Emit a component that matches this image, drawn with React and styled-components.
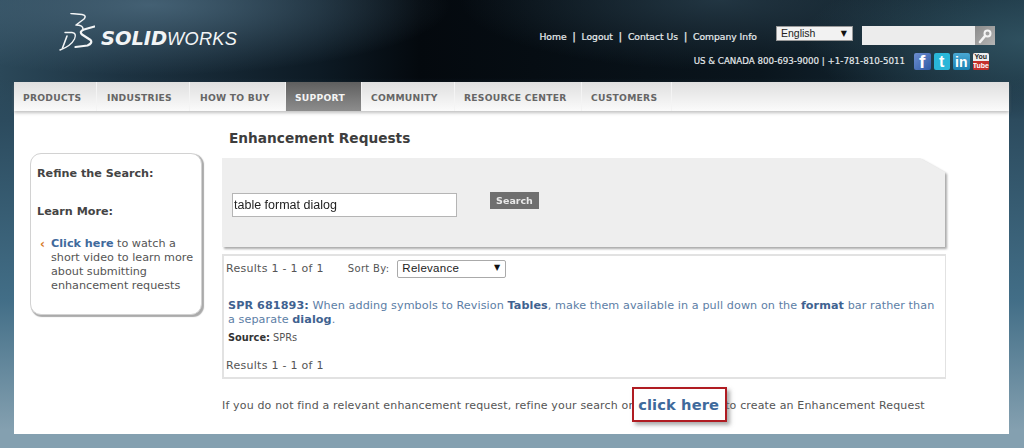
import React from 'react';
import styled, { createGlobalStyle } from 'styled-components';

const Global = createGlobalStyle`
  html, body { margin: 0; padding: 0; }
  body {
    width: 1024px; height: 448px; overflow: hidden;
    font-family: "DejaVu Sans", Verdana, sans-serif;
  }
`;

const Page = styled.div`
  width: 1024px; height: 448px; overflow: hidden;
  background:
    linear-gradient(to bottom, rgba(44,75,94,0) 78px, #2c4b5e 120px) top / 100% 120px no-repeat,
    radial-gradient(ellipse 300px 70px at 150px 5px, rgba(75,105,125,.85), rgba(75,105,125,0) 100%),
    radial-gradient(ellipse 220px 80px at 1024px 40px, rgba(50,85,100,.85), rgba(50,85,100,0) 100%),
    radial-gradient(ellipse 260px 70px at 720px 0px, rgba(40,62,76,.8), rgba(40,62,76,0) 100%),
    linear-gradient(to right, #2b4859 0, #1d3342 120px, #0d1a24 320px, #04090e 420px, #0a151d 760px, #1a3240 1024px) top / 100% 120px no-repeat,
    linear-gradient(to bottom, #2c4b5e 120px, #426e87 300px, #84a0b0 430px);
`;

const Header = styled.header`
  height: 82px; display: flex; justify-content: space-between;
`;
const Brand = styled.div`
  display: flex; align-items: flex-start; padding: 13px 0 0 57px; gap: 6px;
`;
const BrandName = styled.div`
  margin-top: 14px; color: #f2f4f5; font-family: "Liberation Sans", sans-serif;
  font-style: italic; font-size: 18.2px; line-height: 24px; letter-spacing: .3px; font-weight: 400; white-space: nowrap;
  b { font-family: "DejaVu Sans", sans-serif; font-size: 19.5px; font-weight: 700; letter-spacing: -0.1px; }
`;
const Tools = styled.div`
  width: 486px; padding: 26px 29px 0 0; box-sizing: border-box;
  display: flex; flex-direction: column; align-items: flex-end;
`;
const ToolRow = styled.div`
  display: flex; align-items: flex-start; width: 100%; justify-content: flex-end;
`;
const Links = styled.nav`
  display: flex; align-items: center; margin: 5px 19px 0 0; flex: none;
  font-size: 9.2px; line-height: 12px; color: #e8ecee; font-weight: 400;
  -webkit-text-stroke: .2px #e8ecee; white-space: nowrap;
  i { font-style: normal; margin: 0 5.6px; font-size: 11px; }
`;
const FakeSelect = styled.div`
  flex: none; width: ${p => p.$w}px; height: ${p => p.$h}px; box-sizing: border-box; background: ${p => p.$bg || '#fff'};
  border: 1px solid ${p => p.$line}; display: flex; align-items: center; justify-content: space-between;
  font-family: "Liberation Sans", sans-serif; font-size: ${p => p.$fs}px; color: #222; padding: 0 ${p => p.$pr}px 1px 4px;
  border-radius: ${p => p.$r || 0}px;
  em { font-style: normal; font-size: 8px; color: #111; font-family: "DejaVu Sans", sans-serif; }
`;
const SearchBox = styled.div`
  display: flex; flex: none; width: 133px; height: 19px; margin-left: 9px;
`;
const SearchField = styled.div`flex: 1; background: #ececec;`;
const SearchBtn = styled.div`
  width: 20px; background: linear-gradient(135deg, #8a8a8a, #b5b5b5); display: flex; align-items: center; justify-content: center;
`;
const Phone = styled.div`
  display: flex; align-items: center; margin-top: 8px; padding-right: 6px; color: #e8ecee;
  font-size: 8.7px; line-height: 17px; -webkit-text-stroke: .15px #e8ecee; white-space: nowrap;
`;
const Socials = styled.div`display: flex; flex: none; gap: 3px; margin-left: 9px;`;
const Social = styled.div`
  flex: none; width: 16.5px; height: 17px; border-radius: 2px; background: ${p => p.$bg}; color: #fff; overflow: hidden; -webkit-text-stroke: 0;
  display: flex; align-items: center; justify-content: center; flex-direction: column;
  font-family: "Liberation Sans", sans-serif; font-weight: 700; font-size: ${p => p.$fs}px; line-height: 1;
`;
const TubeTop = styled.span`color: #222; font-size: 7px; background: #eee; width: 100%; text-align: center; line-height: 8px;`;
const TubeBottom = styled.span`color: #fff; font-size: 7px; background: #c4302b; width: 100%; text-align: center; line-height: 9px;`;

const NavBar = styled.nav`
  margin: 0 15px 0 14px; height: 29px; display: flex;
  background: linear-gradient(to bottom, #dfdfdf, #fbfbfb);
  box-shadow: 0 2px 3px rgba(120,120,120,.45); position: relative;
`;
const NavItem = styled.a`
  display: flex; align-items: center; height: 100%; box-sizing: border-box;
  width: ${p => p.$w}px; padding: 1px 0 0 ${p => p.$pl || 9}px; border-right: 1px solid #f4f4f4;
  font-weight: 700; font-size: 9.2px; letter-spacing: .25px; white-space: nowrap;
  color: ${p => p.$active ? '#f4f4f4' : '#666'};
  background: ${p => p.$active ? 'linear-gradient(to bottom, #5f5f5f, #8d8d8d)' : 'none'};
`;

const Content = styled.main`
  margin: 0 15px 0 14px; height: 323px; background: #fff; display: flex; color: #444;
`;
const Side = styled.aside`
  width: 172px; height: 162px; margin: 42px 0 0 16px; flex: none; box-sizing: border-box; background: #fff;
  border: 1px solid #d2d2d2; border-radius: 11px; box-shadow: 1.5px 1.5px 1px #aaa;
  padding: 13px 0 0 6px; font-size: 11.2px; line-height: 14px;
`;
const SideHead = styled.h3`
  margin: 0 0 ${p => p.$mb}px; font-size: 11.2px; line-height: 14px; font-weight: 700; color: #444;
`;
const Bullet = styled.div`display: flex; color: #555;`;
const Chevron = styled.span`
  flex: none; width: 14px; color: #d67a1e; font-size: 12px; font-weight: 700; line-height: 14px; padding-left: 3px; box-sizing: border-box;
`;
const SideText = styled.div`width: 148px;`;
const SideLink = styled.a`color: #3f6a9c; font-weight: 700;`;
const Main = styled.section`
  margin-left: 20px; width: 724px; flex: none;
`;
const Title = styled.h1`
  margin: 0; padding: 19px 0 0 7px; height: 47px; box-sizing: border-box;
  font-size: 13.7px; line-height: 17px; font-weight: 700; color: #3d3d3d;
`;
const PanelShadow = styled.div`
  width: 723px; filter: drop-shadow(2px 2px 1px #aaa);
`;
const Panel = styled.form`
  height: 89px; background: #eee; box-sizing: border-box; padding: 35px 0 0 10px; display: flex; align-items: flex-start; margin: 0;
  clip-path: polygon(0 0, 698px 0, 100% 14px, 100% 100%, 0 100%);
`;
const Input = styled.div`
  width: 225px; height: 24px; box-sizing: border-box; background: #fff; border: 1px solid #b5b5b5;
  font-family: "Liberation Sans", sans-serif; font-size: 12.5px; color: #222; line-height: 22px; padding-left: 1px;
`;
const GoBtn = styled.button`
  margin: -1px 0 0 33px; width: 49px; height: 17px; border: 0; padding: 0; background: #6f6f6f; color: #e8e8e8;
  font-family: "DejaVu Sans", sans-serif; font-weight: 700; font-size: 9.5px; line-height: 17px;
`;
const Results = styled.div`
  margin-top: 7px; width: 724px; height: 125px; box-sizing: border-box; border: 1px solid #e2e2e2; border-width: 2px 1px 2px 2px;
  padding: 4px 0 0 2px; font-size: 11px; line-height: 14px; color: #555; letter-spacing: .28px;
`;
const ResultBar = styled.div`display: flex; align-items: center; height: 17px;`;
const Sort = styled.span`margin: 0 8px 0 24px; font-size: 10px; letter-spacing: .3px;`;
const Hit = styled.p`
  margin: 22px 0 0 2px; max-width: 712px; color: #5c7ea6; font-size: 11.2px; line-height: 14px; letter-spacing: .08px;
  b { color: #3f6290; }
`;
const SourceLine = styled.div`
  margin: 4px 0 0 2px; font-size: 9.8px; line-height: 14px; color: #555; letter-spacing: 0;
  b { color: #333; }
`;
const Foot = styled.div`margin-top: 14px; font-size: 11px; line-height: 14px;`;
const Closing = styled.div`
  display: flex; align-items: flex-start; margin-top: 8px; font-size: 11px; line-height: 38px; color: #555; white-space: nowrap; letter-spacing: .16px;
`;
const Callout = styled.a`
  flex: none; width: 95px; height: 35px; box-sizing: border-box; margin: 0 -2px 0 -1px; position: relative;
  border: 2px solid #b01c22; box-shadow: 3px 3px 4px rgba(100,100,100,.55);
  color: #3f6a9c; font-weight: 700; font-size: 14.7px; line-height: 32px; padding-left: 4px; letter-spacing: .1px;
`;

export default function App() {
  return (
    <Page>
      <Global />
      <Header>
        <Brand>
          <svg width="38" height="38" viewBox="57 13 38 38" fill="none" stroke="#f3f5f6" strokeLinecap="round" strokeLinejoin="round">
            <path d="M71 13.5 L82 14.5 Q87 15.5 84 19 L76 25 Q83 25 83 29" strokeWidth="1.5" />
            <path d="M65 32.5 L72 32.5 Q77 33 74.5 39 Q71 46 60 50" strokeWidth="1.4" />
            <path d="M67 36 L62.5 48" strokeWidth="1.6" />
            <path d="M94.5 26.5 L84 29.5 Q79 31.5 82 34.5 L90.5 40 Q93 43 87.5 45.5 L75.5 47" strokeWidth="2.2" />
          </svg>
          <BrandName><b>SOLID</b>WORKS</BrandName>
        </Brand>
        <Tools>
          <ToolRow>
            <Links>Home<i>|</i>Logout<i>|</i>Contact Us<i>|</i>Company Info</Links>
            <FakeSelect $w={77} $h={15} $line="#999" $bg="#f2f2f2" $pr={5} $fs={10.5}>English<em>▼</em></FakeSelect>
            <SearchBox>
              <SearchField />
              <SearchBtn>
                <svg width="16" height="16" viewBox="0 0 16 16" fill="none" stroke="#f4f4f4">
                  <circle cx="10.5" cy="5.5" r="3" strokeWidth="2" />
                  <path d="M8 8 L3 14" strokeWidth="2.6" strokeLinecap="round" />
                </svg>
              </SearchBtn>
            </SearchBox>
          </ToolRow>
          <Phone>
            US &amp; CANADA 800-693-9000 | +1-781-810-5011
            <Socials>
              <Social $bg="linear-gradient(135deg,#6d8fd0,#2f5aa6)" $fs={19}>f</Social>
              <Social $bg="#29b6d8" $fs={16}>t</Social>
              <Social $bg="linear-gradient(#4aa8d4,#1a7fb0)" $fs={14}>in</Social>
              <Social $bg="#c4302b" $fs={7}><TubeTop>You</TubeTop><TubeBottom>Tube</TubeBottom></Social>
            </Socials>
          </Phone>
        </Tools>
      </Header>
      <NavBar>
        <NavItem $w={83}>PRODUCTS</NavItem>
        <NavItem $w={93} $pl={10}>INDUSTRIES</NavItem>
        <NavItem $w={96} $pl={10}>HOW TO BUY</NavItem>
        <NavItem $w={76} $active>SUPPORT</NavItem>
        <NavItem $w={93} $pl={9}>COMMUNITY</NavItem>
        <NavItem $w={127} $pl={9}>RESOURCE CENTER</NavItem>
        <NavItem $w={90} $pl={9}>CUSTOMERS</NavItem>
      </NavBar>
      <Content>
        <Side>
          <SideHead $mb={24}>Refine the Search:</SideHead>
          <SideHead $mb={18}>Learn More:</SideHead>
          <Bullet>
            <Chevron>‹</Chevron>
            <SideText><SideLink>Click here</SideLink> to watch a short video to learn more about submitting enhancement requests</SideText>
          </Bullet>
        </Side>
        <Main>
          <Title>Enhancement Requests</Title>
          <PanelShadow>
            <Panel>
              <Input>table format dialog</Input>
              <GoBtn type="button">Search</GoBtn>
            </Panel>
          </PanelShadow>
          <Results>
            <ResultBar>
              Results 1 - 1 of 1
              <Sort>Sort By:</Sort>
              <FakeSelect $w={109} $h={18} $line="#aaa" $pr={5} $r={2} $fs={11.5}>Relevance<em>▼</em></FakeSelect>
            </ResultBar>
            <Hit>
              <b>SPR 681893:</b> When adding symbols to Revision <b>Tables</b>, make them available in a pull down on the <b>format</b> bar rather than a separate <b>dialog</b>.
            </Hit>
            <SourceLine><b>Source:</b> SPRs</SourceLine>
            <Foot>Results 1 - 1 of 1</Foot>
          </Results>
          <Closing>
            If you do not find a relevant enhancement request, refine your search or
            <Callout>click here</Callout>
            to create an Enhancement Request
          </Closing>
        </Main>
      </Content>
    </Page>
  );
}
